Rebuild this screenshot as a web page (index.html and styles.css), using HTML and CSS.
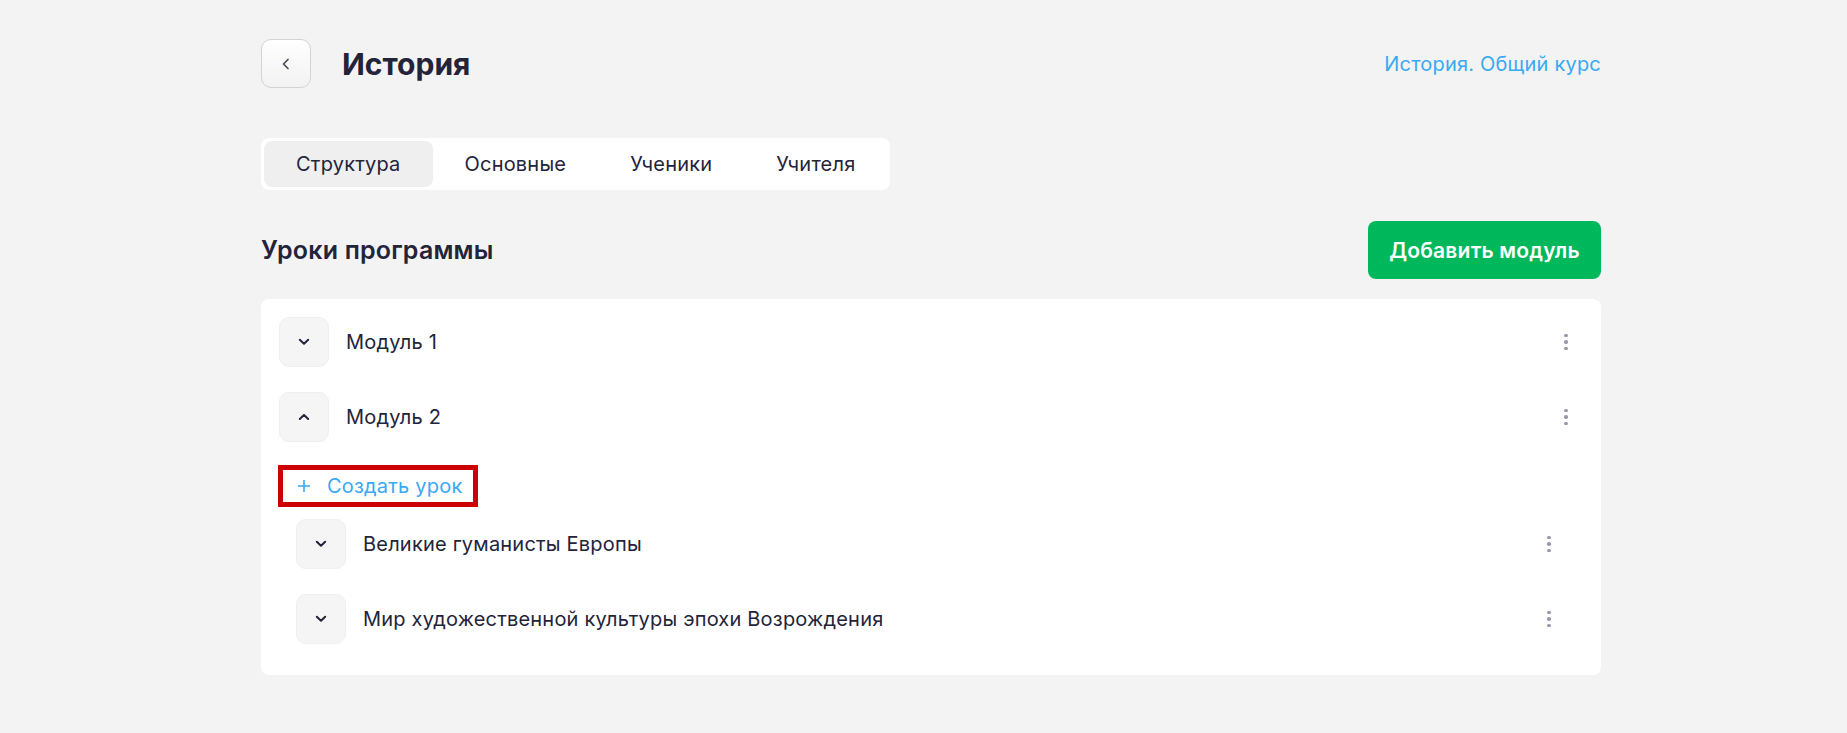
FILE: index.html
```html
<!DOCTYPE html>
<html lang="ru">
<head>
<meta charset="utf-8">
<title>История</title>
<link rel="stylesheet" href="styles.css">
</head>
<body>
<div class="page">
  <header class="header">
    <div class="header-left">
      <button class="back" aria-label="Назад">
        <svg width="12" height="12" viewBox="0 0 12 12"><path d="M8 1.5 L3.5 6 L8 10.5" fill="none" stroke="#4a4b5c" stroke-width="1.7" stroke-linecap="round" stroke-linejoin="round"/></svg>
      </button>
      <h1 class="title">История</h1>
    </div>
    <a class="course-link" href="#">История. Общий курс</a>
  </header>

  <nav class="tabs">
    <span class="tab active">Структура</span>
    <span class="tab">Основные</span>
    <span class="tab">Ученики</span>
    <span class="tab">Учителя</span>
  </nav>

  <div class="section-head">
    <h2 class="section-title">Уроки программы</h2>
    <button class="add-btn">Добавить модуль</button>
  </div>

  <div class="card">
    <div class="row">
      <span class="toggle"><svg width="12" height="8" viewBox="0 0 12 8"><path d="M1.8 1.8 L6 5.8 L10.2 1.8" fill="none" stroke="#23243a" stroke-width="2" stroke-linecap="round" stroke-linejoin="round"/></svg></span>
      <span class="name">Модуль 1</span>
      <span class="dots"><i></i><i></i><i></i></span>
    </div>
    <div class="row">
      <span class="toggle"><svg width="12" height="8" viewBox="0 0 12 8"><path d="M1.8 6 L6 2 L10.2 6" fill="none" stroke="#23243a" stroke-width="2" stroke-linecap="round" stroke-linejoin="round"/></svg></span>
      <span class="name">Модуль 2</span>
      <span class="dots"><i></i><i></i><i></i></span>
    </div>
    <button class="create">
      <svg width="14" height="14" viewBox="0 0 14 14"><path d="M7 1 V13 M1 7 H13" fill="none" stroke="#3aa9f3" stroke-width="1.6"/></svg>
      <span>Создать урок</span>
    </button>
    <div class="lessons">
      <div class="row">
        <span class="toggle"><svg width="12" height="8" viewBox="0 0 12 8"><path d="M1.8 1.8 L6 5.8 L10.2 1.8" fill="none" stroke="#23243a" stroke-width="2" stroke-linecap="round" stroke-linejoin="round"/></svg></span>
        <span class="name">Великие гуманисты Европы</span>
        <span class="dots"><i></i><i></i><i></i></span>
      </div>
      <div class="row">
        <span class="toggle"><svg width="12" height="8" viewBox="0 0 12 8"><path d="M1.8 1.8 L6 5.8 L10.2 1.8" fill="none" stroke="#23243a" stroke-width="2" stroke-linecap="round" stroke-linejoin="round"/></svg></span>
        <span class="name">Мир художественной культуры эпохи Возрождения</span>
        <span class="dots"><i></i><i></i><i></i></span>
      </div>
    </div>
  </div>
</div>
</body>
</html>
```

FILE: styles.css
```css
* { box-sizing: border-box; }
html, body { margin: 0; padding: 0; }
body {
  background: #f3f3f3;
  font-family: Inter, "Noto Sans", sans-serif;
  color: #23243a;
  letter-spacing: 0.2px;
}
.page {
  padding: 39px 246px 40px 261px;
}
.header {
  display: flex;
  align-items: center;
  justify-content: space-between;
  height: 49px;
}
.header-left {
  display: flex;
  align-items: center;
}
.back {
  width: 50px;
  height: 49px;
  border: 1px solid #d3d3d6;
  border-radius: 10px;
  background: linear-gradient(#ffffff, #f2f2f2);
  display: flex;
  align-items: center;
  justify-content: center;
  padding: 0;
}
.title {
  margin: 0 0 0 31px;
  font-size: 30px;
  font-weight: 700;
  letter-spacing: 0;
  color: #23243a;
}
.course-link {
  font-size: 20px;
  color: #3aa9f3;
  text-decoration: none;
}
.tabs {
  margin-top: 50px;
  display: inline-flex;
  background: #fff;
  border-radius: 8px;
  padding: 3px;
}
.tab {
  height: 46px;
  line-height: 46px;
  padding: 0 32px;
  font-size: 20px;
  border-radius: 8px;
  color: #23243a;
}
.tab.active {
  background: #efefef;
}
.section-head {
  margin-top: 31px;
  display: flex;
  align-items: center;
  justify-content: space-between;
}
.section-title {
  margin: 0;
  font-size: 25px;
  font-weight: 600;
}
.add-btn {
  width: 233px;
  height: 58px;
  border: none;
  border-radius: 8px;
  background: #00b85c;
  color: #fff;
  font-family: inherit;
  font-size: 21px;
  font-weight: 600;
  letter-spacing: 0.2px;
}
.card {
  margin-top: 20px;
  background: #fff;
  border-radius: 8px;
  padding: 18px 18px 31px;
}
.row {
  display: flex;
  align-items: center;
  height: 50px;
}
.row + .row { margin-top: 25px; }
.toggle {
  width: 50px;
  height: 50px;
  flex: none;
  border: 1px solid #efeff0;
  background: #f5f5f6;
  border-radius: 10px;
  display: flex;
  align-items: center;
  justify-content: center;
}
.name {
  margin-left: 17px;
  font-size: 20px;
  flex: 1;
}
.dots {
  width: 34px;
  display: flex;
  flex-direction: column;
  align-items: center;
  gap: 3px;
}
.dots i {
  width: 3.5px;
  height: 3.5px;
  border-radius: 50%;
  background: #9898a8;
}
.create {
  margin-top: 23px;
  margin-left: -1px;
  width: 200px;
  height: 42px;
  border: 5px solid #cc0000;
  background: #fff;
  display: flex;
  align-items: center;
  padding: 0 0 0 14px;
  gap: 16px;
  color: #3aa9f3;
  font-family: inherit;
  font-size: 20px;
  letter-spacing: 0.2px;
}
.lessons {
  margin-top: 12px;
  padding: 0 17px;
}
```
